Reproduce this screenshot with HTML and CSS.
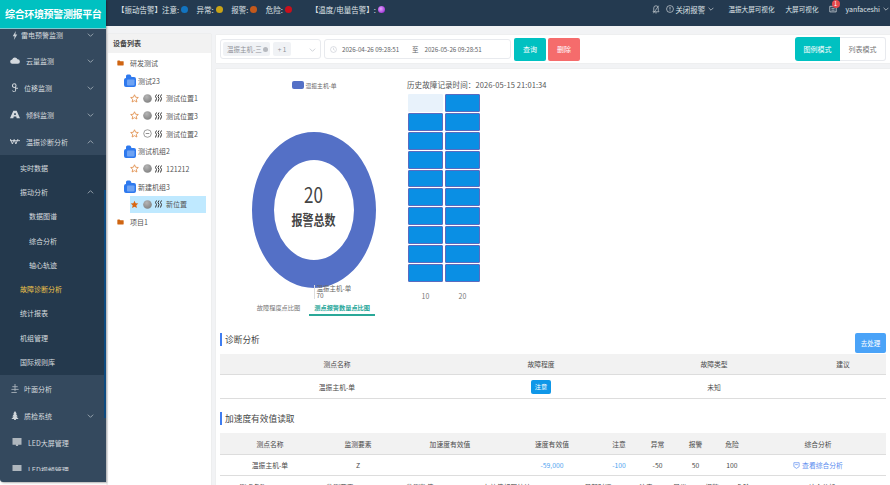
FILE: index.html
```html
<!DOCTYPE html>
<html lang="zh">
<head>
<meta charset="utf-8">
<title>综合环境预警测报平台</title>
<link rel="stylesheet" href="styles.css">
</head>
<body>
<svg class="defs" width="0" height="0">
  <defs>
    <symbol id="chev" viewBox="0 0 10 6"><path d="M1 1l4 4 4-4" fill="none" stroke="currentColor" stroke-width="1.1"/></symbol>
    <symbol id="chevup" viewBox="0 0 10 6"><path d="M1 5l4-4 4 4" fill="none" stroke="currentColor" stroke-width="1.1"/></symbol>
    <symbol id="star" viewBox="0 0 12 12"><path d="M6 1l1.5 3.3 3.6.4-2.7 2.4.8 3.6L6 8.9l-3.2 1.8.8-3.6L.9 4.7l3.6-.4z" fill="none" stroke="#e08a45" stroke-width="1.1"/></symbol>
    <symbol id="starf" viewBox="0 0 12 12"><path d="M6 1l1.5 3.3 3.6.4-2.7 2.4.8 3.6L6 8.9l-3.2 1.8.8-3.6L.9 4.7l3.6-.4z" fill="#d9650f"/></symbol>
    <symbol id="ball" viewBox="0 0 10 10"><defs><radialGradient id="g" cx=".4" cy=".3" r=".8"><stop offset="0" stop-color="#b5b5b5"/><stop offset="1" stop-color="#7d7d7d"/></radialGradient></defs><circle cx="5" cy="5" r="4.8" fill="url(#g)"/></symbol>
    <symbol id="minus" viewBox="0 0 10 10"><circle cx="5" cy="5" r="4.2" fill="#fff" stroke="#777" stroke-width=".8"/><path d="M3 5h4" stroke="#666" stroke-width=".8"/></symbol>
    <symbol id="wave" viewBox="0 0 8 8"><path d="M1.5.5l-1 2 1 2-1 3M4 .5l-1 2 1 2-1 3M6.5.5l-1 2 1 2-1 3" fill="none" stroke="#333" stroke-width="1"/></symbol>
    <symbol id="fblue" viewBox="0 0 12 13" preserveAspectRatio="none"><path d="M0 6a2 2 0 0 1 2-2V2a1.500 1.500 0 0 1 1.500-1.500h2a1.500 1.500 0 0 1 1.300.8L7.500 3H10a2 2 0 0 1 2 2v6a2 2 0 0 1-2 2H2a2 2 0 0 1-2-2z" fill="#2e79ee"/><rect x="3" y="5.500" width="7.500" height="6" rx=".8" fill="#6ea3f3"/></symbol>
    <symbol id="forange" viewBox="0 0 10 8"><path d="M.5 1a.6.6 0 0 1 .6-.6h2.6l1 1h4.2a.6.6 0 0 1 .6.6v5a.6.6 0 0 1-.6.6H1.100a.6.6 0 0 1-.6-.6z" fill="#cf6512"/></symbol>
  </defs>
</svg>
<div class="app">
  <aside class="sidebar">
    <div class="logo">综合环境预警测报平台</div>
    <nav class="menu">
      <div class="menu-item first"><svg class="mi" viewBox="0 0 10 12"><path d="M6 0L2 7h2.500L3.500 12 8 4.500H5.500z" fill="#c9d0d6"/></svg><span class="ml tight">雷电预警监测</span><svg class="chev"><use href="#chev"/></svg></div>
      <div class="menu-item"><svg class="mi" viewBox="0 0 12 8"><path d="M3 8a2.600 2.600 0 0 1-.4-5.200A3.400 3.400 0 0 1 9 2.600 2.700 2.700 0 0 1 9.300 8z" fill="#d4d9de"/></svg><span class="ml">云量监测</span><svg class="chev"><use href="#chev"/></svg></div>
      <div class="menu-item"><svg class="mi" viewBox="0 0 10 12"><circle cx="4" cy="3.500" r="2.400" fill="none" stroke="#cfd5da" stroke-width="1.400"/><path d="M5.800 5v4.500a2 2 0 0 1-4 .5M6 7h3" fill="none" stroke="#cfd5da" stroke-width="1.300"/></svg><span class="ml narrow">位移监测</span><svg class="chev"><use href="#chev"/></svg></div>
      <div class="menu-item"><svg class="mi" viewBox="0 0 12 9"><path d="M4 0h4l4 9H8L7.500 7h-3L4 9H0zM5 3v2h2V3z" fill="#d4d9de" fill-rule="evenodd"/></svg><span class="ml">倾斜监测</span><svg class="chev"><use href="#chev"/></svg></div>
      <div class="menu-item"><svg class="mi" viewBox="0 0 12 8"><path d="M.5 1l2.400 6L5 1.500 7 7l2.600-6M0 3h12" fill="none" stroke="#d4d9de" stroke-width="1.100"/></svg><span class="ml">温振诊断分析</span><svg class="chev"><use href="#chevup"/></svg></div>
      <div class="submenu">
        <div class="sub">实时数据</div>
        <div class="sub hasup">振动分析<svg class="chev"><use href="#chevup"/></svg></div>
        <div class="sub deep">数据图谱</div>
        <div class="sub deep">综合分析</div>
        <div class="sub deep">轴心轨迹</div>
        <div class="sub active">故障诊断分析</div>
        <div class="sub">统计报表</div>
        <div class="sub">机组管理</div>
        <div class="sub">国际规则库</div>
      </div>
      <div class="menu-item"><svg class="mi" viewBox="0 0 10 10"><path d="M5 0v8M2 3h6M1 6h8M1 9.500h6" stroke="#aab3bb" stroke-width="1" fill="none"/></svg><span class="ml narrow">叶面分析</span></div>
      <div class="menu-item"><svg class="mi" viewBox="0 0 8 10"><path d="M4 0l2 3H5l2 3H5.500L8 9H5v1H3V9H0l2.500-3H1l2-3H2z" fill="#cfd5da"/></svg><span class="ml narrow">质检系统</span><svg class="chev"><use href="#chev"/></svg></div>
      <div class="menu-item led"><svg class="mi" viewBox="0 0 8 8"><path d="M0 0h8v6H5v1H3V6H0z" fill="#aeb6bd"/></svg><span class="ml">LED大屏管理</span></div>
      <div class="menu-item led"><svg class="mi" viewBox="0 0 8 8"><path d="M0 0h8v6H5v1H3V6H0z" fill="#aeb6bd"/></svg><span class="ml">LED视频管理</span></div>
    </nav>
    <i class="thumb"></i>
  </aside>
  <div class="main">
    <header class="topbar">
      <div class="alerts">
        <span>【振动告警】注意:</span><i class="dot blue"></i>
        <span class="a-gap">异常:</span><i class="dot yellow"></i>
        <span class="a-gap">报警:</span><i class="dot orange"></i>
        <span class="a-gap">危险:</span><i class="dot red"></i>
        <span class="a-gap2">【温度/电量告警】:</span><i class="dot purple"></i>
      </div>
      <div class="top-right">
        <svg class="ti" viewBox="0 0 10 12"><path d="M5 1a3 3 0 0 1 3 3v3l1 2H1l1-2V4a3 3 0 0 1 3-3zM4 10.500h2M1.500 11L8.500 1" fill="none" stroke="#cfd5da" stroke-width=".9"/></svg>
        <span class="off"><svg class="ti2" viewBox="0 0 10 10"><circle cx="5" cy="5" r="4.300" fill="none" stroke="#dfe3e6" stroke-width=".8"/><path d="M5 2.500v3.200M5 6.800v.9" stroke="#dfe3e6" stroke-width=".9"/></svg>关闭报警<svg class="chev small"><use href="#chev"/></svg></span>
        <span class="tl1">温振大屏可视化</span>
        <span class="tl2">大屏可视化</span>
        <span class="msg"><svg class="ti" viewBox="0 0 10 10"><path d="M1 1h8v7H1zM3 3.500h4M3 5.800h4" fill="none" stroke="#dfe3e6" stroke-width=".9"/></svg><b class="badge">1</b></span>
        <span class="user">yanfaceshi<svg class="chev small"><use href="#chev"/></svg></span>
      </div>
    </header>
    <div class="body">
      <section class="devices">
        <h4 class="dev-head">设备列表</h4>
        <ul class="tree">
          <li class="lv1"><svg class="fo"><use href="#forange"/></svg>研发测试</li>
          <li class="lv2"><svg class="fb"><use href="#fblue"/></svg>测试23</li>
          <li class="lv3"><svg class="st"><use href="#star"/></svg><svg class="ba"><use href="#ball"/></svg><svg class="wv"><use href="#wave"/></svg>测试位置1</li>
          <li class="lv3"><svg class="st"><use href="#star"/></svg><svg class="ba"><use href="#ball"/></svg><svg class="wv"><use href="#wave"/></svg>测试位置3</li>
          <li class="lv3"><svg class="st"><use href="#star"/></svg><svg class="ba"><use href="#minus"/></svg><svg class="wv"><use href="#wave"/></svg>测试位置2</li>
          <li class="lv2"><svg class="fb"><use href="#fblue"/></svg>测试机组2</li>
          <li class="lv3"><svg class="st"><use href="#star"/></svg><svg class="ba"><use href="#ball"/></svg><svg class="wv"><use href="#wave"/></svg>121212</li>
          <li class="lv2"><svg class="fb"><use href="#fblue"/></svg>新建机组3</li>
          <li class="lv3 selected"><svg class="st"><use href="#starf"/></svg><svg class="ba"><use href="#ball"/></svg><svg class="wv"><use href="#wave"/></svg>新位置</li>
          <li class="lv1"><svg class="fo"><use href="#forange"/></svg>项目1</li>
        </ul>
      </section>
      <section class="content">
        <div class="filter">
          <div class="select">
            <span class="tag">温振主机-三<i class="tag-x"></i></span>
            <span class="tag more">+ 1</span>
            <svg class="chev sel-chev"><use href="#chev"/></svg>
          </div>
          <div class="dates">
            <svg class="clock" viewBox="0 0 10 10"><circle cx="5" cy="5" r="4.200" fill="none" stroke="#c0c4cc" stroke-width=".8"/><path d="M5 2.500V5l1.800 1" fill="none" stroke="#c0c4cc" stroke-width=".8"/></svg>
            <span class="dt">2026-04-26 09:28:51</span><span class="to">至</span><span class="dt">2026-05-26 09:28:51</span>
          </div>
          <button class="btn teal">查询</button>
          <button class="btn coral">删除</button>
          <div class="modes">
            <button class="mode on">图例模式</button>
            <button class="mode">列表模式</button>
          </div>
        </div>
        <div class="card">
          <div class="charts">
            <div class="pie-col">
              <div class="legend"><i class="swatch"></i>温振主机-单</div>
              <div class="pie-wrap">
                <svg class="pie" viewBox="0 0 186 156">
                  <path fill="#5470c6" fill-rule="evenodd" d="M31 78a62 78 0 1 0 124 0a62 78 0 1 0-124 0zM53 78a40 50 0 1 0 80 0a40 50 0 1 0-80 0z"/>
                </svg>
                <div class="pie-text">
                  <div class="pie-num">20</div>
                  <div class="pie-label">报警总数</div>
                </div>
                <div class="pie-tip"><span>温振主机-单</span><span>70</span></div>
              </div>
              <div class="tabs">
                <span class="tab">故障程度点比图</span>
                <span class="tab on">测点报警数量点比图</span>
              </div>
            </div>
            <div class="heat-col">
              <div class="heat-title">历史故障记录时间：2026-05-15 21:01:34</div>
              <div class="heat">
                <i class="cell empty"></i><i class="cell"></i>
                <i class="cell"></i><i class="cell"></i>
                <i class="cell"></i><i class="cell"></i>
                <i class="cell"></i><i class="cell"></i>
                <i class="cell"></i><i class="cell"></i>
                <i class="cell"></i><i class="cell"></i>
                <i class="cell"></i><i class="cell"></i>
                <i class="cell"></i><i class="cell"></i>
                <i class="cell"></i><i class="cell"></i>
                <i class="cell"></i><i class="cell"></i>
              </div>
              <div class="heat-axis"><span>10</span><span>20</span></div>
            </div>
          </div>
          <div class="sec-head">
            <h3 class="sec-title">诊断分析</h3>
            <button class="btn-blue">去处理</button>
          </div>
          <div class="tbl t1 thead"><span>测点名称</span><span>故障程度</span><span>故障类型</span><span>建议</span></div>
          <div class="tbl t1 trow"><span>温振主机-单</span><span><b class="pill">注意</b></span><span>未知</span><span></span></div>
          <div class="sec-head second"><h3 class="sec-title">加速度有效值读取</h3></div>
          <div class="tbl t2 thead"><span>测点名称</span><span>监测要素</span><span>加速度有效值</span><span>速度有效值</span><span>注意</span><span>异常</span><span>报警</span><span>危险</span><span>综合分析</span></div>
          <div class="tbl t2 trow"><span>温振主机-单</span><span>Z</span><span></span><span class="lnk">-59,000</span><span class="lnk">-100</span><span>-50</span><span>50</span><span>100</span><span class="view"><svg class="vi" viewBox="0 0 8 8"><path d="M1 .8h6v4.500L4 7.300 1 5.300zM2.500 3h3" fill="none" stroke="#5b8def" stroke-width=".8"/></svg>查看综合分析</span></div>
          <div class="tbl t3"><span>测点名称</span><span>监测要素</span><span>监测数值</span><span>有效值超限统计</span><span>最新时间</span><span>注意</span><span>异常</span><span>报警</span><span>危险</span><span>综合分析</span></div>
        </div>
      </section>
    </div>
  </div>
</div>
</body>
</html>
```

FILE: styles.css
```css
* { box-sizing: border-box; }
html, body { margin: 0; padding: 0; width: 890px; height: 485px; overflow: hidden; background: #fff; }
body { font-family: "Noto Sans CJK SC", "Noto Sans", sans-serif; font-size: 7px; color: #555; }
i { font-style: normal; display: inline-block; }
.defs { position: absolute; }
.app { display: flex; width: 890px; height: 485px; }

.sidebar { width: 106px; height: 482px; flex: none; position: relative; background: #34495e; border-bottom-left-radius: 3px; display: flex; flex-direction: column; overflow: hidden; box-shadow: 1px 1px 2px rgba(0,0,0,.3); }
.thumb { position: absolute; right: 0; top: 190px; width: 2px; height: 228px; background: #0d4a80; }
.logo { height: 29px; flex: none; background: #00c1c1; border-bottom: 1px solid #7fc9cf; color: #fff; font-size: 10px; font-weight: 700; line-height: 28px; white-space: nowrap; padding-left: 5px; letter-spacing: -.35px; }
.menu { height: 442px; flex: none; overflow: hidden; }
.menu-item { height: 27px; display: flex; align-items: center; padding-left: 10px; position: relative; color: #d6dbdf; }
.menu-item.first { height: 18px; padding-bottom: 6px; }
.menu-item.first > .chev { margin-top: -5px; }
.menu-item.led { height: 27px; padding-left: 12px; }
.mi { width: 10px; height: 9px; flex: none; }
.ml { margin-left: 6px; white-space: nowrap; }
.ml.narrow { margin-left: 4px; }
.ml.tight { margin-left: 1px; }
.chev { width: 7px; height: 4px; color: #b9c2ca; }
.menu-item > .chev, .sub > .chev { position: absolute; left: 87px; top: 50%; margin-top: -2px; }
.submenu { background: #24394d; height: 220px; display: flex; flex-direction: column; justify-content: center; }
.sub { height: 24.300px; line-height: 24px; padding-left: 20px; color: #d6dbdf; position: relative; white-space: nowrap; }
.sub.deep { padding-left: 29px; }
.sub.active { color: #eec34a; }

.main { flex: 1; min-width: 0; display: flex; flex-direction: column; background: #f2f3f5; }
.topbar { height: 26px; flex: none; background: #243a50; color: #dfe3e6; display: flex; align-items: center; justify-content: space-between; font-size: 7.500px; padding-bottom: 8px; }
.alerts { display: flex; align-items: center; padding-left: 11px; white-space: nowrap; }
.dot { width: 7px; height: 7px; border-radius: 50%; margin-left: 2px; }
.blue { background: #1274c0; }
.yellow { background: #c9a417; }
.orange { background: #c4591b; }
.red { background: #c9101c; }
.purple { background: radial-gradient(circle at 40% 40%, #e5a6ff, #8a10c9); }
.a-gap { margin-left: 8.500px; }
.a-gap2 { margin-left: 19px; }
.top-right { display: flex; align-items: center; white-space: nowrap; }
.ti { width: 8px; height: 9px; }
.ti2 { width: 8px; height: 8px; margin-right: 1px; }
.off { margin-left: 6px; display: flex; align-items: center; }
.chev.small { width: 6px; height: 4px; margin-left: 3px; color: #dfe3e6; }
.tl1 { margin-left: 14px; font-size: 6.600px; }
.tl2 { margin-left: 11px; font-size: 6.600px; }
.msg { margin-left: 10px; position: relative; display: flex; }
.badge { position: absolute; left: 3px; top: -5px; width: 8px; height: 8px; border-radius: 50%; background: #e5484d; color: #fff; font-size: 5.500px; line-height: 8px; text-align: center; font-weight: 400; }
.user { margin-left: 9px; margin-right: 1px; font-size: 7px; display: flex; align-items: center; }

.body { flex: 1; min-height: 0; display: flex; padding: 8px 0 0 2px; }
.devices { width: 103px; flex: none; background: #fff; box-shadow: 0 0 1px #d5d5d5; }
.dev-head { margin: 0; height: 19px; line-height: 19px; background: #f2f2f2; padding-left: 5px; font-size: 7px; font-weight: 700; color: #444; }
.tree { list-style: none; margin: 0; padding: 1px 0 0; }
.tree li { height: 17.700px; display: flex; align-items: center; white-space: nowrap; color: #555; font-size: 7px; }
.lv1 { padding-left: 9px; }
.lv2 { padding-left: 16px; }
.lv3 { padding-left: 22px; }
.fo { width: 7px; height: 6px; margin-right: 6px; }
.fb { width: 12px; height: 13px; margin-right: 2px; }
.st { width: 9px; height: 9px; margin-right: 4px; }
.ba { width: 9px; height: 9px; margin-right: 3px; }
.wv { width: 8px; height: 8px; margin-right: 3px; }
.selected { background: #bfe9ff; margin-left: 22px; margin-right: 5px; padding-left: 0; }

.content { flex: 1; min-width: 0; margin-left: 5px; display: flex; flex-direction: column; }
.filter { height: 28px; flex: none; margin-top: 1px; background: #fff; display: flex; align-items: center; padding: 0 4px; box-shadow: 0 0 1px #ddd; }
.select { width: 101px; height: 20px; flex: none; border: 1px solid #e8eaee; border-radius: 3px; display: flex; align-items: center; padding-left: 2px; gap: 3px; position: relative; }
.tag { height: 14px; line-height: 14px; background: #f0f2f5; color: #909399; border-radius: 2px; padding: 0 2px 0 4px; font-size: 6.500px; display: flex; align-items: center; white-space: nowrap; }
.tag.more { padding: 0 5px; }
.tag-x { width: 5px; height: 5px; border-radius: 50%; background: #b6b9bf; margin-left: 1px; }
.sel-chev { position: absolute; right: 4px; top: 8px; color: #c0c4cc; }
.dates { width: 187px; height: 20px; flex: none; margin-left: 3px; border: 1px solid #e8eaee; border-radius: 3px; display: flex; align-items: center; padding-left: 5px; color: #606266; font-size: 6.200px; white-space: nowrap; }
.clock { width: 7px; height: 7px; margin-right: 5px; }
.dt { width: 62px; }
.to { margin: 0 6px 0 8px; font-size: 6.500px; }
.btn { width: 32px; height: 23px; flex: none; border: 0; border-radius: 2px; color: #fff; font: inherit; font-size: 7px; padding: 0; }
.teal { background: #00c1c1; margin-left: 3px; }
.coral { background: #f56c6c; margin-left: 2px; }
.modes { margin-left: auto; display: flex; }
.mode { width: 46px; height: 24px; background: #fff; border: 1px solid #e8eaee; border-left: 0; border-radius: 0 3px 3px 0; color: #777; font: inherit; font-size: 7px; padding: 0; }
.mode.on { width: 45px; background: #00c1c1; border: 0; color: #fff; border-radius: 3px 0 0 3px; }

.card { flex: 1; min-height: 0; margin-top: 6px; background: #fff; overflow: hidden; padding: 11px 4px 0; box-shadow: 0 0 1px #ddd; }
.charts { display: flex; height: 236px; }
.pie-col { width: 187px; flex: none; display: flex; flex-direction: column; align-items: center; }
.legend { height: 10px; display: flex; align-items: center; font-size: 5.800px; color: #666; white-space: nowrap; margin-left: 1px; }
.swatch { width: 12px; height: 8px; border-radius: 2px; background: #5470c6; margin-right: 2px; }
.pie-wrap { position: relative; width: 186px; height: 156px; margin-top: 42px; }
.pie { display: block; width: 186px; height: 156px; }
.pie-text { position: absolute; left: 53px; top: 28px; width: 80px; height: 100px; padding-bottom: 11px; display: flex; flex-direction: column; align-items: center; justify-content: center; color: #444; }
.pie-num { font-size: 17px; line-height: 24px; transform: scaleY(1.250); }
.pie-label { font-size: 11px; line-height: 16px; margin-top: 5px; font-weight: 700; transform: scaleY(1.250); }
.pie-tip { position: absolute; left: 93px; top: 153px; border-left: 1px solid #ddd; padding-left: 2px; height: 14px; display: flex; flex-direction: column; font-size: 6.500px; line-height: 7px; color: #666; white-space: nowrap; overflow: hidden; }
.tabs { display: flex; align-items: flex-start; gap: 9px; margin-top: 13px; height: 15px; margin-left: 5px; }
.tab { height: 15px; line-height: 13px; font-size: 6.200px; color: #777; white-space: nowrap; }
.tab.on { color: #26a69a; font-weight: 700; border-bottom: 2px solid #2aa898; width: 66px; text-align: center; }
.heat-col { width: 150px; flex: none; }
.heat-title { height: 10px; line-height: 10px; font-size: 7.500px; letter-spacing: .1px; color: #555; white-space: nowrap; }
.heat { width: 73px; margin: 4px 0 0 1px; display: grid; grid-template-columns: 35px 35px; grid-auto-rows: 17.900px; column-gap: 2px; row-gap: 1px; }
.cell { border: 1px solid #5a6bc0; border-radius: 1px; background: #0a8fe4; }
.cell.empty { background: #e8f2fb; border-color: #e8f2fb; }
.heat-axis { width: 73px; margin: 9px 0 0 1px; display: grid; grid-template-columns: 35px 35px; column-gap: 2px; text-align: center; color: #777; font-size: 7px; line-height: 10px; }

.sec-head { height: 21px; margin-top: 17px; display: flex; align-items: flex-start; justify-content: space-between; }
.sec-head.second { margin-top: 13px; height: 21px; }
.sec-title { margin: 0; height: 13px; line-height: 13px; border-left: 2px solid #3f7df0; padding-left: 3px; font-size: 8.700px; font-weight: 400; color: #444; }
.btn-blue { width: 31px; height: 20px; border: 0; border-radius: 2px; background: #4aa3f8; color: #fff; font: inherit; font-size: 6.500px; padding: 0; }
.tbl { display: grid; align-items: center; text-align: center; white-space: nowrap; font-size: 6.800px; color: #4a4a4a; width: 666px; }
.t1 { grid-template-columns: 234px 174px 172px 86px; }
.t2 { grid-template-columns: 100px 76px 108px 96px 38px 39px 37px 36px 136px; }
.t3 { grid-template-columns: 66px 108px 52px 122px 60px 36px 32px 32px 30px 128px; height: 14px; padding-top: 6px; line-height: 10px; }
.thead { background: #f2f2f2; border-bottom: 1px solid #ddd; }
.t1.thead { height: 21px; }
.t1.trow { height: 24px; border-bottom: 1px solid #ddd; }
.t2.thead { height: 22px; }
.t2.trow { height: 21px; border-bottom: 1px solid #ddd; }
.pill { display: inline-block; width: 20px; height: 14px; line-height: 14px; background: #0f97e8; color: #fff; border-radius: 2px; font-weight: 400; font-size: 6.200px; }
.lnk { color: #4da3ef; }
.view { color: #5b8def; display: flex; justify-content: center; align-items: center; }
.vi { width: 7px; height: 7px; margin-right: 2px; }
```
